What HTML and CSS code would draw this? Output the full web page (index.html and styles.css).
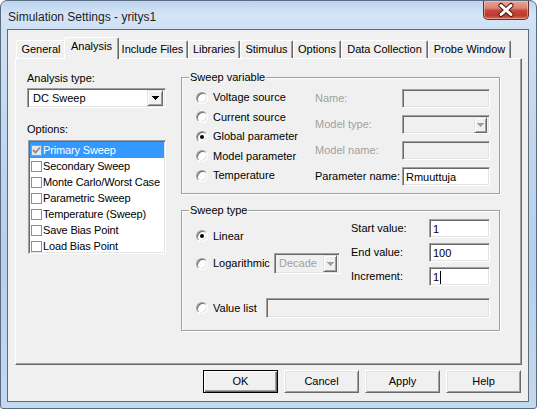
FILE: index.html
```html
<!DOCTYPE html>
<html>
<head>
<meta charset="utf-8">
<title>Simulation Settings</title>
<link rel="stylesheet" href="styles.css">
</head>
<body>
<div class="window">
  <div class="titlebar">
    <span class="title">Simulation Settings - yritys1</span>
    <div class="close">
      <svg width="44" height="18" viewBox="0 0 44 18">
        <path d="M17 4.5 L27 13.5 M27 4.5 L17 13.5" stroke="#4a1712" stroke-width="5" stroke-linecap="round"/>
        <path d="M17 4.5 L27 13.5 M27 4.5 L17 13.5" stroke="#ffffff" stroke-width="3" stroke-linecap="round"/>
      </svg>
    </div>
  </div>
  <div class="client">
    <div class="tabs">
      <div class="tab t-general">General</div>
      <div class="tab sel t-analysis">Analysis</div>
      <div class="tab t-include">Include Files</div>
      <div class="tab t-libraries">Libraries</div>
      <div class="tab t-stimulus">Stimulus</div>
      <div class="tab t-options">Options</div>
      <div class="tab t-data">Data Collection</div>
      <div class="tab t-probe">Probe Window</div>
    </div>
    <div class="panel">
      <div class="left">
        <div class="lbl">Analysis type:</div>
        <div class="combo dc">
          <span class="combo-text">DC Sweep</span>
          <div class="dd dd-16"><svg width="7" height="4" viewBox="0 0 7 4"><path d="M0 0h7v1H0zM1 1h5v1H1zM2 2h3v1H2zM3 3h1v1H3z" fill="#000"/></svg></div>
        </div>
        <div class="lbl opts">Options:</div>
        <div class="listbox">
          <div class="item selected"><span class="cb checked"><svg width="9" height="9" viewBox="0 0 9 9"><path d="M1 4 L3.5 6.5 L8 1.5" stroke="#8a8a8a" stroke-width="1.8" fill="none"/></svg></span>Primary Sweep</div>
          <div class="item"><span class="cb"></span>Secondary Sweep</div>
          <div class="item"><span class="cb"></span>Monte Carlo/Worst Case</div>
          <div class="item"><span class="cb"></span>Parametric Sweep</div>
          <div class="item"><span class="cb"></span>Temperature (Sweep)</div>
          <div class="item"><span class="cb"></span>Save Bias Point</div>
          <div class="item"><span class="cb"></span>Load Bias Point</div>
        </div>
      </div>
      <div class="right">
        <div class="group g1">
          <span class="legend">Sweep variable</span>
          <div class="radios">
            <div class="rrow"><span class="radio"></span><span class="rlabel">Voltage source</span></div>
            <div class="rrow"><span class="radio"></span><span class="rlabel">Current source</span></div>
            <div class="rrow"><span class="radio on"></span><span class="rlabel">Global parameter</span></div>
            <div class="rrow"><span class="radio"></span><span class="rlabel">Model parameter</span></div>
            <div class="rrow"><span class="radio"></span><span class="rlabel">Temperature</span></div>
          </div>
          <div class="fields">
            <div class="flabel dis">Name:</div>
            <div class="edit disabled"></div>
            <div class="flabel dis">Model type:</div>
            <div class="combo disabled mt">
              <span class="combo-text"></span>
              <div class="dd dd-13"><svg width="7" height="4" viewBox="0 0 7 4"><path d="M0 0h7v1H0zM1 1h5v1H1zM2 2h3v1H2zM3 3h1v1H3z" fill="#a0a0a0"/></svg></div>
            </div>
            <div class="flabel dis">Model name:</div>
            <div class="edit disabled"></div>
            <div class="flabel">Parameter name:</div>
            <div class="edit">Rmuuttuja</div>
          </div>
        </div>
        <div class="group g2">
          <span class="legend">Sweep type</span>
          <div class="g2top">
            <div class="g2left">
              <div class="lrow"><span class="radio on"></span><span class="rlabel">Linear</span></div>
              <div class="lrow log"><span class="radio"></span><span class="rlabel log-label">Logarithmic</span>
                <div class="combo disabled decade">
                  <span class="combo-text dis">Decade</span>
                  <div class="dd dd-14"><svg width="7" height="4" viewBox="0 0 7 4"><path d="M0 0h7v1H0zM1 1h5v1H1zM2 2h3v1H2zM3 3h1v1H3z" fill="#a0a0a0"/></svg></div>
                </div>
              </div>
            </div>
            <div class="g2right">
              <div class="flabel">Start value:</div>
              <div class="edit">1</div>
              <div class="flabel">End value:</div>
              <div class="edit">100</div>
              <div class="flabel">Increment:</div>
              <div class="edit">1<span class="caret"></span></div>
            </div>
          </div>
          <div class="g2bottom">
            <span class="radio"></span><span class="rlabel vl-label">Value list</span>
            <div class="edit disabled vl"></div>
          </div>
        </div>
      </div>
    </div>
    <div class="buttons">
      <div class="btn default">OK</div>
      <div class="btn">Cancel</div>
      <div class="btn">Apply</div>
      <div class="btn">Help</div>
    </div>
  </div>
</div>
</body>
</html>
```

FILE: styles.css
```css
* { box-sizing: border-box; }
html, body { margin: 0; padding: 0; }
body {
  width: 537px;
  height: 409px;
  overflow: hidden;
  background: #ffffff;
  font-family: "Liberation Sans", Arial, sans-serif;
  font-size: 11px;
  color: #000;
}
.window {
  width: 537px;
  height: 409px;
  border: 1px solid #5b6b80;
  border-radius: 7px 7px 3px 3px;
  background: linear-gradient(180deg, #bcd4ee 0px, #d5e5f7 14px, #cfe1f4 28px, #c3d8ef 120px, #b6cfea 260px, #c4d9f0 409px);
  display: flex;
  flex-direction: column;
  overflow: hidden;
}
.titlebar {
  height: 28px;
  display: flex;
  justify-content: space-between;
  align-items: flex-start;
}
.title {
  font-family: "Liberation Sans", Arial, sans-serif;
  font-size: 12px;
  line-height: 14px;
  margin: 9px 0 0 7px;
  color: #1e1e1e;
}
.close {
  width: 46px;
  height: 19px;
  margin-right: 7px;
  border: 1px solid #6e2a24;
  border-top: none;
  border-radius: 0 0 5px 5px;
  background: linear-gradient(180deg, #e6a597 0%, #d98473 40%, #c7493b 52%, #c0392d 80%, #d66a55 100%);
  box-shadow: inset 0 0 0 1px rgba(255, 220, 210, 0.45);
  display: flex;
  align-items: center;
  justify-content: center;
}
.close svg { display: block; }

.client {
  margin: 0 7px 0 6px;
  height: 373px;
  border: 1px solid #5f6b78;
  background: #f0f0f0;
  padding: 7px 7px 0 7px;
}

/* tabs */
.tabs {
  display: flex;
  align-items: flex-end;
  height: 21px;
  padding-left: 1px;
}
.tab {
  height: 18px;
  border-top: 1px solid #ffffff;
  border-left: 1px solid #ffffff;
  border-right: 1px solid #696969;
  box-shadow: inset -1px 0 0 #a0a0a0;
  border-radius: 2px 2px 0 0;
  text-align: center;
  line-height: 13px;
  padding-top: 2px;
  background: #f0f0f0;
  white-space: nowrap;
}
.tab.sel {
  height: 22px;
  margin: 0 -2px -1px -2px;
  position: relative;
  z-index: 1;
  padding-top: 2px;
}
.t-general { width: 50px; }
.t-analysis { width: 55px; }
.t-include { width: 71px; }
.t-libraries { width: 52px; }
.t-stimulus { width: 53px; }
.t-options { width: 48px; }
.t-data { width: 87px; }
.t-probe { width: 83px; }

.panel {
  width: 507px;
  height: 307px;
  border-top: 1px solid #ffffff;
  border-left: 1px solid #ffffff;
  border-right: 1px solid #696969;
  border-bottom: 1px solid #696969;
  box-shadow: inset -1px -1px 0 #a0a0a0;
  display: flex;
  padding: 13px 0 0 11px;
}

/* left column */
.left {
  width: 139px;
  display: flex;
  flex-direction: column;
}
.lbl { height: 13px; line-height: 13px; }
.lbl.opts { margin-top: 15px; }

.combo {
  position: relative;
  display: flex;
  align-items: center;
  background: #ffffff;
  border-top: 1px solid #a0a0a0;
  border-left: 1px solid #a0a0a0;
  border-right: 1px solid #ffffff;
  border-bottom: 1px solid #ffffff;
  box-shadow: inset 1px 1px 0 #696969, inset -1px -1px 0 #e3e3e3;
  padding: 2px 2px 2px 5px;
}
.combo.dc { height: 20px; margin-top: 3px; }
.combo-text { flex: 1; line-height: 13px; }
.combo.disabled { background: #f0f0f0; }
.dd {
  height: 16px;
  background: #f0f0f0;
  border-top: 1px solid #e3e3e3;
  border-left: 1px solid #e3e3e3;
  border-right: 1px solid #696969;
  border-bottom: 1px solid #696969;
  box-shadow: inset 1px 1px 0 #ffffff, inset -1px -1px 0 #a0a0a0;
  display: flex;
  align-items: center;
  justify-content: center;
}
.dd svg { display: block; }
.dd-16 { width: 16px; }
.dd-13 { width: 13px; }
.dd-14 { width: 14px; height: 17px; }

.listbox {
  margin-top: 4px;
  margin-left: 1px;
  width: 138px;
  height: 114px;
  background: #ffffff;
  border-top: 1px solid #a0a0a0;
  border-left: 1px solid #a0a0a0;
  border-right: 1px solid #ffffff;
  border-bottom: 1px solid #ffffff;
  box-shadow: inset 1px 1px 0 #696969, inset -1px -1px 0 #e3e3e3;
  padding: 1px;
  overflow: hidden;
}
.item {
  height: 16px;
  display: flex;
  align-items: center;
  padding-left: 1px;
  white-space: nowrap;
  line-height: 13px;
  letter-spacing: -0.15px;
}
.item.selected { background: #3399ff; color: #ffffff; }
.cb {
  width: 11px;
  height: 11px;
  border: 1px solid #8e8f8f;
  background: #ffffff;
  margin-right: 1px;
  flex: none;
  display: flex;
  align-items: center;
  justify-content: center;
}
.cb.checked { background: #e6e6e6; border-color: #9a9a9a; }
.cb svg { display: block; }

/* right column */
.right {
  margin-left: 15px;
  margin-top: 5px;
  display: flex;
  flex-direction: column;
}
.group {
  position: relative;
  width: 319px;
  border: 1px solid #a0a0a0;
  box-shadow: inset 1px 1px 0 #ffffff, 1px 1px 0 #ffffff;
}
.legend {
  position: absolute;
  top: -7px;
  left: 7px;
  padding: 0 1px;
  background: #f0f0f0;
  line-height: 13px;
}
.g1 {
  height: 117px;
  display: flex;
  padding: 10px 0 0 14px;
}
.radios { width: 119px; }
.rrow {
  height: 19.5px;
  display: flex;
  align-items: center;
}
.radio {
  width: 12px;
  height: 12px;
  flex: none;
  border-radius: 50%;
  background: #ffffff;
  border: 1px solid;
  border-color: #a0a0a0 #ffffff #ffffff #a0a0a0;
  box-shadow: inset 1px 1px 0 #696969, inset -1px -1px 0 #e3e3e3;
  position: relative;
}
.radio.on::after {
  content: "";
  position: absolute;
  left: 3px;
  top: 3px;
  width: 4px;
  height: 4px;
  border-radius: 50%;
  background: #000;
}
.rlabel { margin-left: 5px; line-height: 13px; white-space: nowrap; flex: none; }

.fields {
  margin-top: 1px;
  display: grid;
  grid-template-columns: 87px 88px;
  grid-auto-rows: 19px;
  row-gap: 7px;
  align-content: start;
}
.flabel {
  display: flex;
  align-items: center;
  white-space: nowrap;
  line-height: 13px;
}
.dis { color: #a0a0a0; }
.edit {
  background: #ffffff;
  border-top: 1px solid #a0a0a0;
  border-left: 1px solid #a0a0a0;
  border-right: 1px solid #ffffff;
  border-bottom: 1px solid #ffffff;
  box-shadow: inset 1px 1px 0 #696969, inset -1px -1px 0 #e3e3e3;
  padding: 2px 2px 0 3px;
  line-height: 13px;
  display: flex;
  align-items: center;
}
.edit.disabled { background: #f0f0f0; }
.combo.mt { padding: 1px 2px 1px 5px; }
.caret {
  display: inline-block;
  width: 1px;
  height: 13px;
  background: #000;
  margin-left: 1px;
}

.g2 {
  margin-top: 16px;
  height: 121px;
}
.g2top {
  display: flex;
  padding: 8px 0 0 14px;
}
.g2left {
  width: 144px;
  margin-top: 7px;
}
.lrow {
  height: 20px;
  display: flex;
  align-items: center;
}
.lrow.log {
  height: 21px;
  margin-top: 7px;
}
.log-label { width: 61px; }
.combo.decade {
  width: 66px;
  height: 21px;
  flex: none;
  padding: 1px 2px 1px 4px;
}
.g2right {
  margin-left: 11px;
  display: grid;
  grid-template-columns: 78px 61px;
  grid-auto-rows: 19px;
  row-gap: 5px;
}
.g2bottom {
  display: flex;
  align-items: center;
  padding-left: 14px;
  margin-top: 12px;
  height: 20px;
}
.vl-label { width: 53px; }
.edit.vl { width: 224px; height: 20px; flex: none; }

/* buttons */
.buttons {
  display: flex;
  justify-content: flex-end;
  gap: 6px;
  margin-top: 5px;
}
.btn {
  width: 75px;
  height: 23px;
  background: #f0f0f0;
  border-top: 1px solid #ffffff;
  border-left: 1px solid #ffffff;
  border-right: 1px solid #696969;
  border-bottom: 1px solid #696969;
  box-shadow: inset 1px 1px 0 #e3e3e3, inset -1px -1px 0 #a0a0a0;
  display: flex;
  align-items: center;
  justify-content: center;
  line-height: 13px;
}
.btn.default {
  border: 1px solid #000000;
  box-shadow: inset 1px 1px 0 #ffffff, inset -1px -1px 0 #696969, inset -2px -2px 0 #a0a0a0;
}
```
